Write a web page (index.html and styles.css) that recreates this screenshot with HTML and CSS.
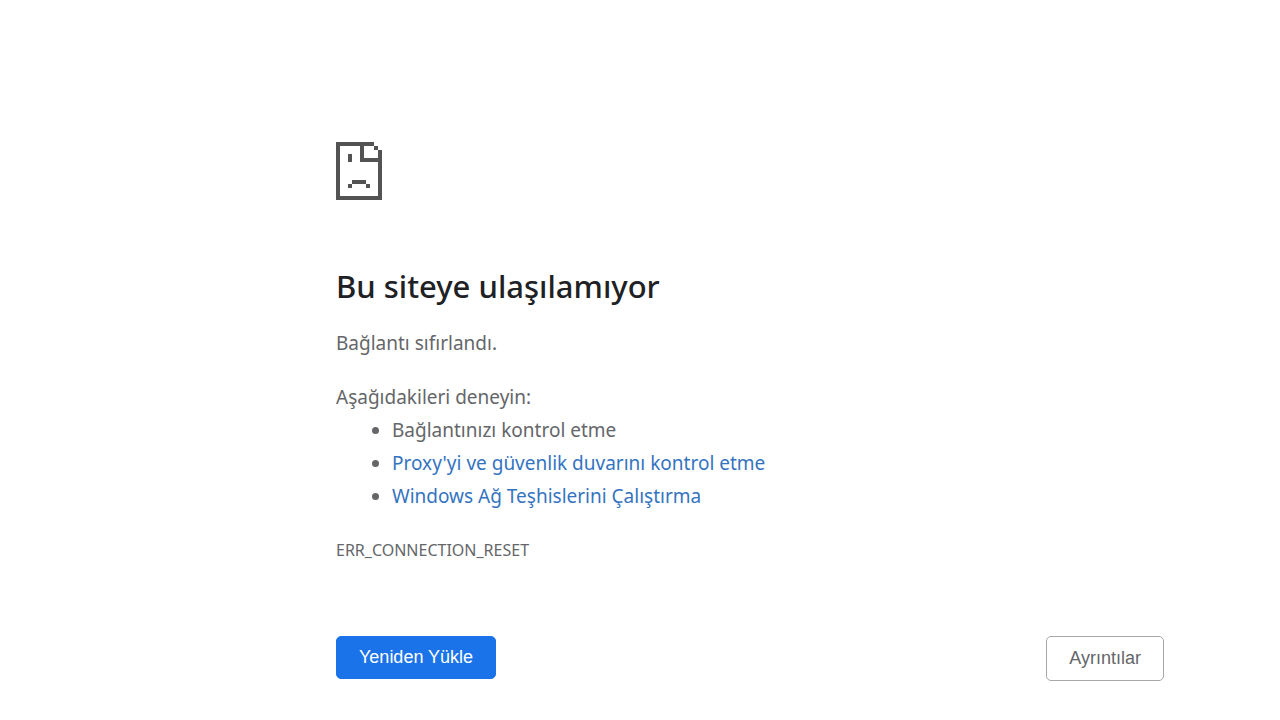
FILE: index.html
```html
<!DOCTYPE html>
<html lang="tr">
<head>
<meta charset="utf-8">
<meta name="viewport" content="width=device-width, initial-scale=1">
<title>Bu siteye ulaşılamıyor</title>
<link rel="stylesheet" href="styles.css">
</head>
<body>
<main class="error-page">
  <svg class="error-icon" viewBox="0 0 23 29" aria-hidden="true" shape-rendering="crispEdges">
    <path fill="#535353" fill-rule="evenodd" d="M0 0H19V2H21V4H23V29H0ZM2 2V27H21V10H12V2ZM14 2V8H21V4H19V2Z"/>
    <path fill="#535353" d="M6 6h2v4H6zM8 19h7v2H8zM6 21h2v2H6zM15 21h2v2h-2z"/>
  </svg>
  <h1 class="title">Bu siteye ulaşılamıyor</h1>
  <p class="summary">Bağlantı sıfırlandı.</p>
  <div class="suggestions">
    <p class="lead">Aşağıdakileri deneyin:</p>
    <ul class="list">
      <li>Bağlantınızı kontrol etme</li>
      <li><a class="link" href="#proxy">Proxy'yi ve güvenlik duvarını kontrol etme</a></li>
      <li><a class="link" href="#diagnose">Windows Ağ Teşhislerini Çalıştırma</a></li>
    </ul>
  </div>
  <p class="code">ERR_CONNECTION_RESET</p>
  <div class="actions">
    <button class="button primary" type="button">Yeniden Yükle</button>
    <button class="button secondary" type="button">Ayrıntılar</button>
  </div>
</main>
</body>
</html>
```
FILE: styles.css
```css
body {
  margin: 0;
  background: #fff;
  color: #646669;
  font: 19px/33px "Noto Sans", sans-serif;
}
.error-page {
  padding: 142px 116px 32px 26.25%;
}
.error-icon {
  display: block;
  width: 46px;
  height: 58px;
}
.title {
  margin: 64px 0 0;
  color: #202124;
  font-size: 31px;
  font-weight: 500;
  line-height: 44px;
}
.summary {
  margin: 19px 0 0;
}
.suggestions {
  margin-top: 21px;
}
.lead {
  margin: 0;
}
.list {
  margin: 0;
  padding-left: 56px;
}
.link {
  color: #3474bf;
  text-decoration: none;
}
.code {
  margin: 21px 0 0;
  font-size: 16px;
}
.actions {
  display: flex;
  flex-wrap: wrap;
  justify-content: space-between;
  align-items: flex-start;
  gap: 16px;
  margin-top: 69px;
}
.button {
  padding: 0 22px;
  border: 1px solid #1a73e8;
  border-radius: 5px;
  font: 18px/41px "Liberation Sans", Arial, sans-serif;
}
.primary {
  background: #1a73e8;
  color: #fff;
}
.secondary {
  background: #fff;
  border-color: #a5a7aa;
  color: #646669;
  line-height: 43px;
}
```
